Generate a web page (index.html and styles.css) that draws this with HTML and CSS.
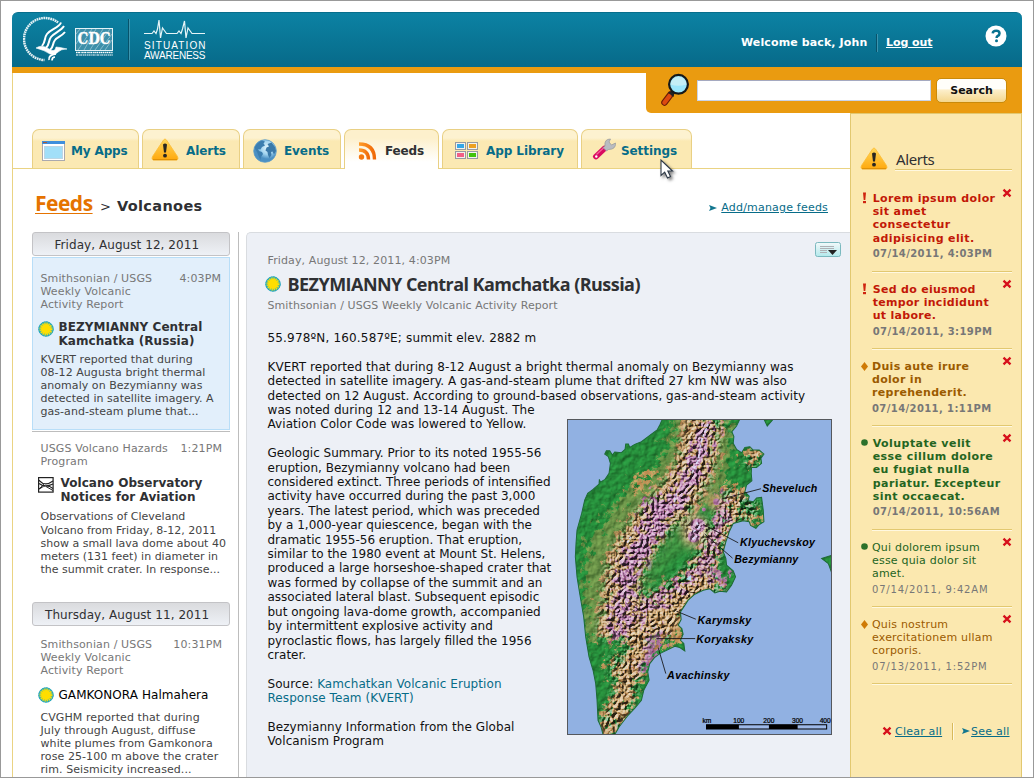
FILE: index.html
```html
<!DOCTYPE html>
<html lang="en">
<head>
<meta charset="utf-8">
<title>Situation Awareness - Feeds</title>
<link rel="stylesheet" href="styles.css">
</head>
<body>
<svg width="0" height="0" class="defs">
  <defs>
    <linearGradient id="warn" x1="0" y1="0" x2="0" y2="1"><stop offset="0" stop-color="#ffd65a"/><stop offset="1" stop-color="#ffa90d"/></linearGradient>
    <symbol id="i-warn" viewBox="0 0 28 24">
      <path d="M12.500 3 Q14 .8 15.500 3 L26.500 19.500 Q28 23 25 23 H3 Q0 23 1.500 19.500 Z" fill="url(#warn)" stroke="#fcbd35" stroke-width=".8" stroke-linejoin="round"/>
      <path d="M2 22.700 H26" stroke="#dc8c00" stroke-width="1"/>
      <path d="M12 7.500 Q14 5.500 16 7.500 L15 15.500 H13 Z" fill="#292622"/><circle cx="14" cy="18.700" r="1.900" fill="#292622"/>
    </symbol>
    <symbol id="i-sun" viewBox="0 0 16 16">
      <circle cx="8" cy="8" r="7.600" fill="#38afb4"/>
      <circle cx="8" cy="8" r="7.200" fill="none" stroke="#1fa4c4" stroke-width="1" stroke-dasharray="2 .6"/>
      <circle cx="8" cy="8" r="5.400" fill="none" stroke="#ffe000" stroke-width="2.200" stroke-dasharray="1.300 .8"/>
      <circle cx="8" cy="8" r="5" fill="#ffde00"/>
    </symbol>
    <symbol id="i-x" viewBox="0 0 10 10"><path d="M1.500 1.700 L8.500 8.300 M8.500 1.700 L1.500 8.300" stroke="#d6101b" stroke-width="2.300"/></symbol>
    <symbol id="i-arrow" viewBox="0 0 8 6"><path d="M0 0 L8 3 L0 6 L1.500 3 Z" fill="#13778f"/></symbol>
    <symbol id="i-bang" viewBox="0 0 7 12"><path d="M2 .5 H5 L4.300 8 H2.700 Z" fill="#cf2410"/><rect x="2" y="9" width="3" height="2.200" fill="#cf2410"/></symbol>
    <symbol id="i-dia" viewBox="0 0 7 9"><path d="M3.500 0 L7 4.500 L3.500 9 L0 4.500 Z" fill="#cf7a05"/></symbol>
    <symbol id="i-dot" viewBox="0 0 7 7"><circle cx="3.500" cy="3.500" r="3.300" fill="#2c712b"/></symbol>
  </defs>
</svg>
<div class="page">
  <header class="header">
    <svg class="hhs" width="46" height="46" viewBox="22 16 46 46" fill="none" stroke="#fff">
      <path d="M57 22.500 A21 21 0 1 0 43.500 60" stroke-width="2.500" stroke-dasharray="1.700 .6" opacity=".9"/>
      <path d="M60 22.500 C58 28 50 29 46 34 C43 38 45 41 41 46" stroke-width="2"/>
      <path d="M63 26 C60 31 53 33 50 37 C47 41 49 44 45 48" stroke-width="2"/>
      <path d="M64 32 C61 36 56 37 54 40 C51 44 53 47 49 50" stroke-width="2"/>
      <path d="M35 48 Q41 44 48 49 Q54 53 55 47 Q58 47 66 49 Q60 49 57 52 Q54 56 49 54 Q43 50 35 48 Z" fill="#fff" stroke-width=".6"/>
      <path d="M55 54 Q47 55 48 60 M54 57 Q51 57 51 60.500" stroke-width="1.700"/>
    </svg>
    <svg class="cdc" width="39" height="29" viewBox="75 28 39 29">
      <rect x="75.500" y="28.500" width="37" height="22" fill="#3d8fa9" stroke="#e4f3f7"/>
      <path d="M78 50 L92 29 M84 50 L96 29 M90 50 L103 29 M95 50 L110 29 M100 50 L112 34 M105 50 L112 40 M76 44 L86 29 M76 34 L80 29" stroke="#b4d9e4" stroke-width=".6"/>
      <text x="77.500" y="43.500" class="cdc-t" textLength="33" lengthAdjust="spacingAndGlyphs">CDC</text>
      <path d="M76 52.500 H113" stroke="#fff" stroke-width="1.600" stroke-dasharray="1.600 .5 2 .6 1 .4"/>
      <path d="M76 55 H113" stroke="#fff" stroke-width="1.200" stroke-dasharray="2 .6 1.200 .4"/>
    </svg>
    <span class="rule"></span>
    <svg class="sa" width="64" height="42" viewBox="143 19 64 42">
      <path d="M144 33.500 H152 L154 31 L156 33.500 L157.500 29 L159 20 L160.500 38 L162.500 28 L166.500 33.500 H177 L179 31 L181 33.500 L182.500 29 L184.500 21 L186 38 L188 28 L192 33.500 H205" fill="none" stroke="#e6f4f7" stroke-width="1.200"/>
      <text x="144" y="49" textLength="61.500" class="sa-t">SITUATION</text>
      <text x="144" y="59" textLength="61.500" class="sa-t">AWARENESS</text>
    </svg>
    <div class="user"><span>Welcome back, John</span><i></i><a>Log out</a></div>
    <svg class="help" width="22" height="22" viewBox="0 0 22 22"><circle cx="11" cy="11" r="10.500" fill="#fff"/><path d="M7.700 8.300 Q8 5.700 11.200 5.700 Q14.500 5.700 14.500 8.400 Q14.500 9.900 12.800 10.900 Q11.600 11.600 11.600 13" fill="none" stroke="#07718f" stroke-width="2.500"/><circle cx="11.500" cy="15.800" r="1.500" fill="#07718f"/></svg>
  </header>
  <div class="stripe"></div>
  <div class="searchrow">
    <form class="search">
      <svg class="mag" width="31" height="36" viewBox="0 0 31 36">
        <path d="M10.500 21.500 L4.500 29.500" stroke="#6b1d08" stroke-width="6.500" stroke-linecap="round"/>
        <path d="M9.500 23 L4.500 29.500" stroke="#dc4a10" stroke-width="4.500" stroke-linecap="round"/>
        <path d="M8 19.500 L13.500 24 L15 17.500 Z" fill="#222"/>
        <circle cx="18.500" cy="11.300" r="9.400" fill="#9be6fb" stroke="#15191b" stroke-width="2.200"/>
        <path d="M10.700 11.500 A7.800 7.800 0 0 1 26.300 11.500 Q18 14 10.700 11.500Z" fill="#c4eef6"/>
      </svg>
      <span class="field"></span>
      <button class="btn" type="button">Search</button>
    </form>
  </div>
  <div class="cols">
    <main class="main">
      <nav class="tabs">
        <a class="tab t1"><svg width="24" height="20" viewBox="0 0 24 20"><rect x=".5" y=".5" width="22" height="19" fill="#fff" stroke="#aaa9ae"/><rect x="0" y="0" width="23" height="3" fill="#3f8fdc"/><path d="M1 1.500 H5" stroke="#a65c3e"/><rect x="2.500" y="5.500" width="18" height="12" fill="#a2dff8" stroke="#bcd6e4"/></svg>My Apps</a>
        <a class="tab t2"><svg width="28" height="24"><use href="#i-warn"/></svg>Alerts</a>
        <a class="tab t3"><svg width="24" height="24" viewBox="0 0 24 24"><defs><radialGradient id="gl" cx=".6" cy=".35"><stop offset="0" stop-color="#e4f6fd"/><stop offset=".6" stop-color="#9fd2ee"/><stop offset="1" stop-color="#4b90c3"/></radialGradient></defs><circle cx="12" cy="12" r="11.300" fill="url(#gl)" stroke="#5a9ac8" stroke-width=".8"/><path d="M1.500 9 Q4 3 9 1.500 L12 2.500 L10.500 4.500 L12 6.500 L9 8 L7.500 10.500 L5 10 L6 12 L9 13 L10 15 L8 18 L7.500 21 L5.500 17 L4 13 Z" fill="#3c7eb0"/><path d="M14.500 5 L18.500 3.500 L22 8 L23 12 L21 15.500 L19.500 12.500 L18 13 L18.500 16 L16.500 19 L15 16 L14.500 13 L12.500 11.500 L13.500 8.500 L16 7.500 Z" fill="#3a79a9"/></svg>Events</a>
        <a class="tab t4 on"><svg width="20" height="18" viewBox="0 0 20 18"><defs><linearGradient id="rs" x1="0" x2="1"><stop offset="0" stop-color="#ff9d2a"/><stop offset="1" stop-color="#f06a08"/></linearGradient></defs><g fill="none" stroke="url(#rs)" stroke-width="3.400"><path d="M1 2 Q16.500 2 16.500 17.500"/><path d="M1 8 Q10.500 8 10.500 17.500"/></g><circle cx="3.500" cy="15" r="2.700" fill="#f4780f"/></svg>Feeds</a>
        <a class="tab t5"><svg width="23" height="18" viewBox="0 0 23 18"><g fill="#f4f2ee" stroke="#979aa0"><rect x=".5" y=".5" width="10" height="7"/><rect x="12.500" y=".5" width="10" height="7"/><rect x=".5" y="9.500" width="10" height="7"/><rect x="12.500" y="9.500" width="10" height="7"/></g><path fill="#35a7e8" d="M2 2h7v4H2z"/><path fill="#eda021" d="M14 2h7v4h-7z"/><path fill="#f25f86" d="M2 11h7v4H2z"/><path fill="#43c30b" d="M14 11h7v4h-7z"/></svg>App Library</a>
        <a class="tab t6"><svg width="26" height="23" viewBox="0 0 26 23"><path d="M4 18.500 L12.500 10.500" stroke="#d90a60" stroke-width="5.800" stroke-linecap="round"/><path d="M4.500 16.500 L12 9.500" stroke="#f75a9b" stroke-width="1.300"/><circle cx="4.300" cy="18.500" r="1.200" fill="#fff"/><path d="M13 8 Q12 1 18.500 1 L17 4 L19.500 7 L23.500 5 Q24 11.500 16.500 11.500 L14.500 13 L11 9.500 Z" fill="#b9bcc1" stroke="#94979b" stroke-width=".7"/></svg>Settings</a>
      </nav>
      <div class="crumbs"><a class="c1">Feeds</a><span class="gt">&gt;</span><b>Volcanoes</b><span class="manage"><svg width="8" height="6"><use href="#i-arrow"/></svg><a>Add/manage feeds</a></span></div>
      <div class="feed">
        <section class="list">
          <h3 class="day">Friday, August 12, 2011</h3>
          <article class="item sel">
            <div class="meta"><span>Smithsonian / USGS<br>Weekly Volcanic<br>Activity Report</span><time>4:03PM</time></div>
            <h4><svg width="16" height="16"><use href="#i-sun"/></svg><span>BEZYMIANNY Central<br>Kamchatka (Russia)</span></h4>
            <p>KVERT reported that during<br>08-12 Augusta bright thermal<br>anomaly on Bezymianny was<br>detected in satellite imagery. A<br>gas-and-steam plume that...</p>
          </article>
          <article class="item two">
            <div class="meta"><span>USGS Volcano Hazards<br>Program</span><time>1:21PM</time></div>
            <h4><svg class="vo" width="16" height="16" viewBox="0 0 16 16"><rect x=".6" y=".6" width="14.500" height="14.500" fill="#fff" stroke="#222" stroke-width="1.200"/><path d="M1 3.500 Q7 10 15 4 M1 6.500 Q7 11 15 7 M1 12 Q8 6 15 11.500" fill="none" stroke="#222" stroke-width="1.100"/><path d="M1 3 L6 7.500 L1 12 M15 13.500 L8 9.500" fill="none" stroke="#222"/></svg><span>Volcano Observatory<br>Notices for Aviation</span></h4>
            <p>Observations of Cleveland<br>Volcano from Friday, 8-12, 2011<br>show a small lava dome about 40<br>meters (131 feet) in diameter in<br>the summit crater. In response...</p>
          </article>
          <h3 class="day d2">Thursday, August 11, 2011</h3>
          <article class="item three">
            <div class="meta"><span>Smithsonian / USGS<br>Weekly Volcanic<br>Activity Report</span><time>10:31PM</time></div>
            <h4 class="read"><svg width="16" height="16"><use href="#i-sun"/></svg><span>GAMKONORA Halmahera</span></h4>
            <p>CVGHM reported that during<br>July through August, diffuse<br>white plumes from Gamkonora<br>rose 25-100 m above the crater<br>rim. Seismicity increased...</p>
          </article>
        </section>
        <section class="detail">
          <div class="dhead"><span>Friday, August 12, 2011, 4:03PM</span>
            <svg class="menu" width="26" height="16" viewBox="0 0 26 16"><defs><linearGradient id="mg" x1="0" y1="0" x2="0" y2="1"><stop offset="0" stop-color="#f3f9fa"/><stop offset="1" stop-color="#b2e9ec"/></linearGradient></defs><rect x=".5" y=".5" width="25" height="14" rx="2" fill="url(#mg)" stroke="#7bb9bf"/><path d="M5 4.500 H19 M5 6.500 H19 M5 8.500 H12 M5 10.500 H12" stroke="#aeb1b6"/><path d="M13 8 H22 L17.500 13 Z" fill="#222"/></svg></div>
          <h1><svg width="16" height="16"><use href="#i-sun"/></svg>BEZYMIANNY Central Kamchatka (Russia)</h1>
          <div class="src">Smithsonian / USGS Weekly Volcanic Activity Report</div>
          <div class="text">
            <p class="geo">55.978ºN, 160.587ºE; summit elev. 2882 m</p>
            <p class="lead">KVERT reported that during 8-12 August a bright thermal anomaly on Bezymianny was<br>detected in satellite imagery. A gas-and-steam plume that drifted 27 km NW was also<br>detected on 12 August. According to ground-based observations, gas-and-steam activity</p>
            <div class="split">
              <div class="col">
                <p class="lead2">was noted during 12 and 13-14 August. The<br>Aviation Color Code was lowered to Yellow.</p>
                <p>Geologic Summary. Prior to its noted 1955-56<br>eruption, Bezymianny volcano had been<br>considered extinct. Three periods of intensified<br>activity have occurred during the past 3,000<br>years. The latest period, which was preceded<br>by a 1,000-year quiescence, began with the<br>dramatic 1955-56 eruption. That eruption,<br>similar to the 1980 event at Mount St. Helens,<br>produced a large horseshoe-shaped crater that<br>was formed by collapse of the summit and an<br>associated lateral blast. Subsequent episodic<br>but ongoing lava-dome growth, accompanied<br>by intermittent explosive activity and<br>pyroclastic flows, has largely filled the 1956<br>crater.</p>
                <p class="lead2">Source: <a>Kamchatkan Volcanic Eruption<br>Response Team (KVERT)</a></p>
                <p class="lead2">Bezymianny Information from the Global<br>Volcanism Program</p>
              </div>
              <svg class="map" width="265" height="316" viewBox="22 27 794 947" preserveAspectRatio="none">
                <defs>
                  <clipPath id="land"><path id="coast" d="M308 27 L300 45 L292 60 L270 76 L245 95 L225 103 L210 112 L206 102 L198 102 L196 118 L185 128 L165 126 L158 135 L150 122 L140 122 L135 132 L146 140 L152 160 L148 190 L136 208 L122 216 L119 208 L118 222 L100 238 L84 250 L75 270 L66 310 L52 360 L49 400 L47 440 L52 500 L60 550 L72 620 L78 680 L88 740 L100 780 L108 820 L112 870 L115 930 L124 950 L130 973 L165 973 L178 950 L205 915 L226 893 L245 870 L252 840 L268 810 L264 785 L270 760 L284 742 L300 730 L325 718 L345 708 L360 712 L375 722 L372 700 L362 690 L370 672 L366 655 L355 645 L364 628 L362 605 L372 590 L385 570 L405 552 L430 540 L450 536 L465 548 L480 543 L500 545 L515 525 L527 500 L520 482 L500 465 L498 445 L490 425 L498 395 L508 365 L520 340 L550 332 L568 335 L572 346 L588 355 L596 345 L612 335 L610 300 L605 262 L590 264 L580 275 L565 272 L568 258 L555 245 L560 225 L576 212 L574 190 L575 172 L590 172 L605 160 L603 145 L612 132 L598 120 L580 120 L570 110 L555 112 L545 128 L530 118 L520 100 L522 80 L516 65 L530 48 L540 27 Z M612 27 L622 48 L638 30 Z M816 435 L785 445 L805 460 L816 490 Z"/></clipPath>
                  <filter id="rough" x="-20%" y="-20%" width="140%" height="140%" color-interpolation-filters="sRGB"><feGaussianBlur stdDeviation="5" result="b"/><feTurbulence type="fractalNoise" baseFrequency=".05" numOctaves="4" seed="4"/><feDisplacementMap in="b" scale="120" xChannelSelector="R" yChannelSelector="G"/></filter>
                  <filter id="soft"><feGaussianBlur stdDeviation="12"/></filter>
                  <filter id="relief" x="0" y="0" width="100%" height="100%" color-interpolation-filters="sRGB"><feTurbulence type="turbulence" baseFrequency=".06" numOctaves="3" seed="9"/><feDiffuseLighting surfaceScale="14" diffuseConstant=".88" lighting-color="#fff"><feDistantLight azimuth="225" elevation="42"/></feDiffuseLighting></filter>
                  <filter id="plain" x="0" y="0" width="100%" height="100%" color-interpolation-filters="sRGB"><feTurbulence type="fractalNoise" baseFrequency=".05" numOctaves="4" seed="3"/><feDiffuseLighting surfaceScale="4.500" diffuseConstant=".72" lighting-color="#fff"><feDistantLight azimuth="225" elevation="45"/></feDiffuseLighting></filter>
                  <mask id="hills" maskUnits="userSpaceOnUse" x="22" y="27" width="794" height="947"><g filter="url(#soft)" fill="none" stroke="#fff" stroke-linejoin="round"><path d="M440 20 L400 190 L345 270 L260 360 L200 460 L185 580 L170 690" stroke-width="120"/><path d="M530 240 L490 350 L440 450 L370 530 L270 590 L240 690 L210 790 L190 870 L140 970 M480 510 L330 600 L300 680 M570 130 L600 150 M480 270 L590 310 M410 330 V390 M150 770 H190" stroke-width="70"/></g></mask>
                </defs>
                <rect x="22" y="27" width="794" height="947" fill="#91b1e2"/>
                <g clip-path="url(#land)">
                  <rect x="22" y="27" width="794" height="947" fill="#258a39"/>
                  <g filter="url(#rough)" fill="none" stroke-linejoin="round">
                    <path d="M440 20 L400 190 L320 270 L230 350 L170 460 L160 580 L160 690" stroke="#85944c" stroke-width="190" opacity=".7"/>
                    <path d="M430 20 L400 190 L345 270 L260 360 L200 460 L185 580 L170 690" stroke="#c0965e" stroke-width="115"/>
                    <path d="M530 230 L490 350 L440 450 L370 530 L270 590 L240 690 L210 790 L190 870 L140 980 M480 510 L330 600 L300 680 M560 130 L600 140 M590 310 V340 M150 770 H180 M340 600 L360 700 M240 200 L250 230" stroke="#c4975b" stroke-width="60"/>
                    <path d="M445 40 L400 190 L345 270 L270 360 L205 460 L195 580 L175 680" stroke="#b675aa" stroke-width="46"/>
                    <path d="M270 270 L300 320 L240 420 L190 520" stroke="#b675aa" stroke-width="52"/>
                    <path d="M500 260 L450 430 L380 520 L270 580 L235 640 M440 470 L500 520 M300 660 L290 700 L235 790" stroke="#b373a2" stroke-width="28"/>
                  </g>
                  <g filter="url(#soft)"><path d="M310 400 L365 320 L385 420 L345 440 L290 510 L240 560 L250 500 Z" fill="#3b8c3e"/><ellipse cx="409" cy="362" rx="36" ry="48" fill="#d9ad83"/><circle cx="468" cy="275" r="26" fill="#c79b68"/></g>
                  <g fill="#b67aa8"><circle cx="414" cy="347" r="22"/><circle cx="402" cy="379" r="18"/><circle cx="470" cy="275" r="10"/><circle cx="432" cy="298" r="6"/></g>
                  <rect x="22" y="27" width="794" height="947" filter="url(#plain)" class="over" opacity=".7"/>
                  <g mask="url(#hills)" class="blend"><rect x="22" y="27" width="794" height="947" filter="url(#relief)"/></g>
                  <path d="M445 42 L425 90 L415 150 L396 190 M350 250 L342 285 M202 398 L214 380 M410 337 L420 352 L400 365 M398 388 L412 378" fill="none" stroke="#dfe2ff" stroke-width="5" stroke-dasharray="9 4 14 6" opacity=".85"/>
                  <path d="M378 507 L394 494 V512 Z" fill="#b7ddf0"/>
                </g>
                <use href="#coast" fill="none" stroke="#1d6b35" stroke-width="3"/>
                <path d="M485 267 L603 236 M430 343 L535 398 M435 372 L518 444 M350 603 L408 627 M290 685 H406 M295 712 L318 790" stroke="#111" stroke-width="2.500"/>
                <g class="lbl">
                  <text x="607" y="246" textLength="165">Sheveluch</text><text x="540" y="409" textLength="225">Klyuchevskoy</text><text x="523" y="459" textLength="192">Bezymianny</text><text x="413" y="640" textLength="161">Karymsky</text><text x="409" y="698" textLength="171">Koryaksky</text><text x="322" y="806" textLength="187">Avachinsky</text>
                </g>
                <g class="km"><text x="428" y="938">km</text><text x="520" y="938">100</text><text x="610" y="938">200</text><text x="696" y="938">300</text><text x="779" y="938" textLength="33">400</text></g>
                <path d="M440 943 H800 V956 H440 Z" fill="#9db9e8" stroke="#000" stroke-width="3"/><path d="M440 943 H537 V956 H440 Z M627 943 H713 V956 H627 Z" fill="#000"/>
                <rect x="23.500" y="28.500" width="791" height="944" fill="none" stroke="#55585d" stroke-width="3"/>
              </svg>
            </div>
          </div>
        </section>
      </div>
    </main>
    <aside class="alerts">
      <div class="ahead"><svg width="28" height="24"><use href="#i-warn"/></svg><h2>Alerts</h2></div>
      <div class="al red first"><svg class="k" width="7" height="12"><use href="#i-bang"/></svg><div><p>Lorem ipsum dolor<br>sit amet<br>consectetur<br>adipisicing elit.</p><time>07/14/2011, 4:03PM</time></div><svg class="x" width="10" height="10"><use href="#i-x"/></svg></div>
      <div class="al red"><svg class="k" width="7" height="12"><use href="#i-bang"/></svg><div><p>Sed do eiusmod<br>tempor incididunt<br>ut labore.</p><time>07/14/2011, 3:19PM</time></div><svg class="x" width="10" height="10"><use href="#i-x"/></svg></div>
      <div class="al amber"><svg class="k" width="7" height="9"><use href="#i-dia"/></svg><div><p>Duis aute irure<br>dolor in<br>reprehenderit.</p><time>07/14/2011, 1:11PM</time></div><svg class="x" width="10" height="10"><use href="#i-x"/></svg></div>
      <div class="al green long"><svg class="k" width="7" height="7"><use href="#i-dot"/></svg><div><p>Voluptate velit<br>esse cillum dolore<br>eu fugiat nulla<br>pariatur. Excepteur<br>sint occaecat.</p><time>07/14/2011, 10:56AM</time></div><svg class="x" width="10" height="10"><use href="#i-x"/></svg></div>
      <div class="al green seen"><svg class="k" width="7" height="7"><use href="#i-dot"/></svg><div><p>Qui dolorem ipsum<br>esse quia dolor sit<br>amet.</p><time>07/14/2011, 9:42AM</time></div><svg class="x" width="10" height="10"><use href="#i-x"/></svg></div>
      <div class="al amber seen"><svg class="k" width="7" height="9"><use href="#i-dia"/></svg><div><p>Quis nostrum<br>exercitationem ullam<br>corporis.</p><time>07/13/2011, 1:52PM</time></div><svg class="x" width="10" height="10"><use href="#i-x"/></svg></div>
      <div class="afoot"><svg width="10" height="10"><use href="#i-x"/></svg><a>Clear all</a><i></i><svg width="8" height="6"><use href="#i-arrow"/></svg><a>See all</a></div>
    </aside>
  </div>
  <svg class="cursor" width="20" height="26" viewBox="0 0 20 26"><path d="M1 1 V16.500 L4.700 13.200 L7.500 19 L10.500 17.600 L7.800 12 H12.500 Z" fill="#fff" stroke="#2c3846" stroke-width="1.100"/></svg>
</div>
</body>
</html>
```
FILE: styles.css
```css
* { box-sizing: border-box; margin: 0; padding: 0; }
body { width: 1034px; height: 778px; overflow: hidden; background: #fff; font-family: "DejaVu Sans", Verdana, sans-serif; font-size: 12px; color: #111; }
svg { display: block; flex: none; }
.defs { position: absolute; }
p, h4, .meta, .day, .tab { white-space: nowrap; }
.page { position: relative; width: 1034px; height: 778px; border: 1px solid #999; padding: 11px 11px 0; overflow: hidden; }

.header { display: flex; height: 55px; border-radius: 6px 6px 0 0; background: linear-gradient(#0c82a3, #076a89); border-top: 1px solid #076e8c; padding-left: 11px; }
.hhs { margin-top: 3px; }
.cdc { margin: 15px 0 0 6px; overflow: visible; }
.cdc-t { font: bold 16px "DejaVu Serif", serif; fill: #fff; stroke: #fff; stroke-width: .3px; }
.rule { width: 2px; height: 41px; margin: 6px 0 0 14px; border-left: 1px solid #07536b; border-right: 1px solid #3c96b0; }
.sa { margin: 6px 0 0 13px; }
.sa-t { font: 10px "Liberation Sans", Arial, sans-serif; fill: #fff; }
.user { display: flex; margin-left: auto; padding-top: 20px; font-weight: bold; font-size: 11px; line-height: 20px; color: #fff; }
.user span { width: 126px; white-space: nowrap; letter-spacing: .12px; }
.user i { width: 2px; height: 18px; margin: 1px 8px 0 9px; border-left: 1px solid #07536b; border-right: 1px solid #3c96b0; }
.user a { width: 48px; white-space: nowrap; text-decoration: underline; letter-spacing: -.05px; }
.help { margin: 12px 15px 0 51px; }
.stripe { height: 6px; background: #ea9b10; }
.searchrow { display: flex; justify-content: flex-end; height: 40px; border-left: 1px solid #ead383; }
.search { display: flex; width: 376px; height: 40px; padding-left: 14px; background: #ea9b10; border-radius: 0 0 0 5px; }
.mag { margin-top: 0; }
.field { width: 234px; height: 21px; margin: 7px 0 0 6px; background: #fff; border: 1px solid #c9d3e8; border-top-color: #a5a9c0; }
.btn { width: 71px; height: 25px; margin: 5px 0 0 5px; border: 1px solid #c98a0a; border-radius: 5px; background: linear-gradient(#fffefa 0 45%, #fdf0cd 46%, #f4d68c); font: bold 11px "DejaVu Sans", sans-serif; color: #111; }

.cols { display: grid; grid-template-columns: 838px 172px; height: 664px; }
.main { border-left: 1px solid #ead383; display: flex; flex-direction: column; min-width: 0; }
.tabs { display: flex; gap: 3px; height: 56px; padding: 16px 0 0 19px; border-bottom: 1px solid #ead383; }
.tab { display: flex; align-items: center; height: 39px; padding-top: 3px; border: 1px solid #e9d084; border-bottom: 0; border-radius: 7px 7px 0 0; background: linear-gradient(#fdf2d0 0 8px, #fbe9b3 11px); font-size: 12px; font-weight: bold; color: #076c88; letter-spacing: -.08px; }
.t1 { width: 107px; padding-left: 9px; gap: 5px; letter-spacing: -.15px; }
.t2 { width: 98px; padding-left: 8px; gap: 7px; }
.t2 svg { margin-top: -3px; }
.t3 { width: 98px; padding-left: 9px; gap: 7px; }
.t4 { width: 95px; padding-left: 13px; gap: 7px; }
.t5 { width: 136px; padding-left: 12px; gap: 8px; }
.t6 { width: 111px; padding-left: 10px; gap: 3px; }
.t6 svg { margin-top: -3px; }
.tab.on { height: 40px; padding-top: 2px; background: linear-gradient(#fdf0cc 0 8px, #fff 32px); color: #2f3033; letter-spacing: -.15px; }

.crumbs { display: flex; align-items: baseline; height: 63px; padding: 19px 0 0 22px; line-height: 30px; color: #2f3033; }
.c1 { width: 57px; font: bold 21px/30px "Open Sans", "Noto Sans", sans-serif; letter-spacing: -.5px; color: #e57300; text-decoration: underline; text-decoration-thickness: 1px; text-underline-offset: 2px; }
.gt { margin: 0 6px 0 8px; font-size: 13px; }
.crumbs b { font-size: 14.500px; letter-spacing: .35px; }
.manage { display: flex; align-items: center; gap: 4px; margin-left: auto; margin-right: 22px; font-size: 11px; color: #076c88; letter-spacing: .2px; }
.manage a { text-decoration: underline; }

.feed { display: flex; flex: 1; min-height: 0; padding-left: 19px; overflow: hidden; }
.list { width: 207px; height: 546px; border-right: 1px solid #bdbdbd; padding-right: 8px; }
.day { height: 24px; border: 1px solid #c3c3c6; border-radius: 3px; background: linear-gradient(#dadbde, #eef1f6); font-size: 12px; font-weight: normal; line-height: 24px; padding-left: 21.500px; color: #2f3033; letter-spacing: .06px; }
.item { padding: 0 8px; font-size: 11px; line-height: 13.200px; color: #444; border-bottom: 1px solid #bdbdbd; }
.sel { height: 173px; margin-top: 1px; padding: 14px 8px 0 7.500px; background: #e2effb; border: 1px solid #b8def8; box-shadow: 0 1px #fff, 0 2px #bdbdbd; }
.two, .three { padding: 12px 8px 0 8.500px; border: 0; }
.meta { display: flex; justify-content: space-between; color: #777; letter-spacing: .12px; }
.item h4 { display: flex; gap: 5px; margin: 8px 0 0 -3px; font-size: 12px; line-height: 14px; color: #2f3033; letter-spacing: .06px; }
.item h4 svg { margin-top: 1px; }
.item p { margin-top: 5px; letter-spacing: .05px; }
.two p { margin-top: 6px; letter-spacing: 0; }
.two h4 { gap: 7px; }
.two { height: 172px; }
.day.d2 { padding-left: 12px; }
.item h4.read { font-weight: normal; color: #000; margin-top: 10px; }
.item h4.read svg { margin-top: -1px; }
.three p { margin-top: 8px; letter-spacing: .08px; }

.detail { width: 604px; height: 546px; margin-left: 7px; border: 1px solid #d9dce0; border-right: 0; border-radius: 5px 0 0 0; background: #edf0f6; padding: 9px 0 0 20.500px; }
.dhead { display: flex; justify-content: space-between; height: 30px; font-size: 11px; color: #777; letter-spacing: .12px; }
.dhead span { padding-top: 12px; }
.menu { margin-right: 9px; }
.detail h1 { display: flex; align-items: center; gap: 7px; margin-left: -3px; font: bold 18px/24px "Open Sans", "Noto Sans", sans-serif; letter-spacing: -.54px; color: #2f3033; white-space: nowrap; }
.src { margin-top: 2px; font-size: 11px; line-height: 15px; height: 14px; color: #777; letter-spacing: .08px; }
.text { line-height: 14.400px; margin-top: 19px; }
.text p { margin-bottom: 14.400px; }
.text .geo { letter-spacing: .17px; }
.text .lead { margin: 0; letter-spacing: .05px; }
.text .lead2 { letter-spacing: .07px; }
.split { display: flex; }
.col { width: 299.500px; }
.text a { color: #076c88; }
.map { margin-top: 16px; }
.blend { mix-blend-mode: hard-light; opacity: .8; }
.over { mix-blend-mode: overlay; }
.lbl text { font: italic bold 32px "Liberation Sans", Arial, sans-serif; fill: #000; }
.km text { font: 20px "Liberation Sans", Arial, sans-serif; fill: #000; stroke: #000; stroke-width: .7px; }

.alerts { background: #fbe8af; border: 1px solid #e2c870; border-bottom: 0; padding: 32px 9px 0 9px; }
.ahead { display: flex; height: 33px; }
.ahead h2 { width: 117px; height: 24px; margin-left: 7px; padding-left: 1px; font: 15px/27px "Noto Sans", "Open Sans", sans-serif; letter-spacing: -.4px; color: #2f3033; border-bottom: 1px solid #e2c870; box-shadow: 0 1px #fff8e0; }
.al { display: grid; grid-template-columns: 7px minmax(0, 1fr) 10px; column-gap: 4px; position: relative; padding: 11px 0 0 1px; font-size: 11px; line-height: 13.200px; font-weight: bold; height: 77px; letter-spacing: .3px; }
.al::after { content: ""; position: absolute; left: 12px; right: 0; bottom: 0; height: 1px; background: #e2c870; box-shadow: 0 1px #fff8e0; }
.al.first { height: 93px; padding-top: 13px; letter-spacing: .38px; }
.al.long { height: 104px; letter-spacing: .45px; }
.al.red > div, .al.long > div { padding-left: .7px; }
.al time { display: block; margin-top: 2px; font-size: 10px; color: #777; white-space: nowrap; letter-spacing: .4px; }
.al .x { margin-top: -4px; }
.al .k { margin-top: 0; }
.al.amber .k, .al.green .k { margin-top: 2px; }
.red { color: #c21807; } .amber { color: #9b5b00; } .green { color: #24651f; }
.al.seen { font-weight: normal; letter-spacing: .2px; }
.seen time { letter-spacing: .8px; }
.afoot { display: flex; align-items: center; height: 20px; margin: 37px 0 0 22px; font-size: 11px; color: #076c88; white-space: nowrap; letter-spacing: .22px; }
.afoot a { text-decoration: underline; margin-left: 3px; }
.afoot i + svg + a { margin-left: 1px; }
.afoot i { width: 2px; height: 17px; margin: 0 8px 0 10px; border-left: 1px solid #d8b95a; border-right: 1px solid #fff8e0; }
.cursor { position: absolute; left: 659px; top: 158px; filter: drop-shadow(2px 2px 1.500px rgba(0,0,0,.5)); }
```
